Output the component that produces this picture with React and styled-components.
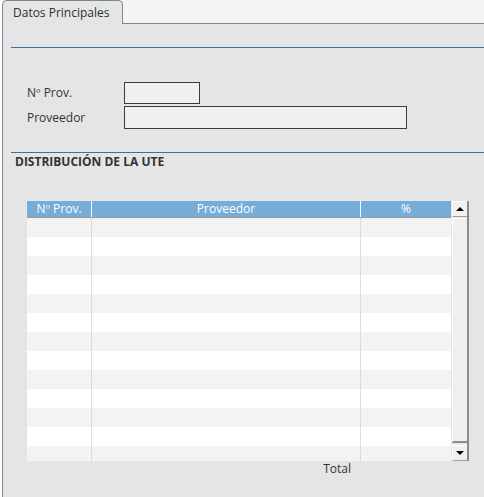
import React from 'react'
import styled, { createGlobalStyle } from 'styled-components'

const GlobalStyle = createGlobalStyle`
  html, body {
    margin: 0;
    padding: 0;
    background: #ffffff;
    font-family: "Open Sans", "DejaVu Sans", sans-serif;
    font-size: 12px;
    line-height: 16px;
    color: #333333;
  }
`

const Frame = styled.div`
  width: 482px;
  height: 497px;
  margin-left: 2px;
  display: flex;
  flex-direction: column;
`

const TabStrip = styled.div`
  display: flex;
  height: 24px;
  background: #f4f4f4;
`

const Tab = styled.div`
  width: 121px;
  box-sizing: border-box;
  border: 1px solid #7b8894;
  border-bottom: none;
  border-radius: 5px 5px 0 0;
  background: #e5e5e5;
  padding: 4px 0 0 10px;
  color: #2f2f2f;
`

const TabFill = styled.div`
  flex: 1;
  border-bottom: 1px solid #7b8894;
`

const Panel = styled.div`
  flex: 1;
  background: #e5e5e5;
  border-left: 1px solid #7b8894;
  padding-left: 8px;
  display: flex;
  flex-direction: column;
`

const Rule = styled.div`
  height: 1px;
  flex: none;
  background: #2f74ae;
  margin-top: ${({ top }) => top}px;
`

const Form = styled.div`
  display: grid;
  grid-template-columns: 97px auto;
  grid-template-rows: 22px 23px;
  row-gap: 2px;
  margin-top: 34px;
  padding-left: 16px;
  align-items: center;
`

const Label = styled.div`
  color: #333333;
`

const Input = styled.div`
  box-sizing: border-box;
  width: ${({ w }) => w}px;
  height: ${({ h }) => h}px;
  border: 1px solid #3c3c3c;
  background: #f0f0f0;
`

const SectionTitle = styled.div`
  font-weight: 700;
  color: #333333;
  padding: 1px 0 0 4px;
  height: 16px;
`

const Grid = styled.div`
  display: flex;
  margin: 30px 0 0 16px;
`

const TableArea = styled.div`
  width: 424px;
  display: flex;
  flex-direction: column;
`

const HeaderRow = styled.div`
  display: grid;
  grid-template-columns: 64px 1px 268px 1px 90px;
  box-sizing: border-box;
  height: 18px;
  border-top: 1px solid #dfe8f0;
  border-bottom: 1px solid #9a9a9a;
  background: #76acd8;
`

const HeaderCell = styled.div`
  color: #ffffff;
  text-align: center;
`

const HeaderSep = styled.div`
  background: #ffffff;
`

const Body = styled.div`
  height: 243px;
  overflow: hidden;
`

const Row = styled.div`
  display: grid;
  grid-template-columns: 64px 1px 268px 1px 90px;
  height: 19px;
  background: ${({ odd }) => (odd ? '#f3f3f3' : '#ffffff')};
`

const Cell = styled.div``

const CellSep = styled.div`
  background: #dcdcdc;
`

const ScrollBar = styled.div`
  width: 15px;
  height: 260px;
  margin: 1px 0 0 1px;
  border-right: 2px solid #8c8c8c;
  display: flex;
  flex-direction: column;
  background: #e8e8e8;
`

const ScrollButton = styled.div`
  box-sizing: border-box;
  height: 16px;
  flex: none;
  background: #f0f0f0;
  border-top: 1px solid #ffffff;
  border-left: 1px solid #ffffff;
  border-bottom: 1px solid #a0a0a0;
  display: flex;
  align-items: center;
  justify-content: center;
`

const Thumb = styled.div`
  flex: 1;
  box-sizing: border-box;
  margin: 1px 0 2px;
  background: #efefef;
  border-left: 1px solid #ffffff;
  border-top: 1px solid #ffffff;
  border-bottom: 2px solid #8c8c8c;
`

const Arrow = styled.div`
  width: 0;
  height: 0;
  border-left: 4px solid transparent;
  border-right: 4px solid transparent;
  ${({ down }) => (down ? 'border-top: 4px solid #000;' : 'border-bottom: 4px solid #000;')}
`

const TotalRow = styled.div`
  display: flex;
  justify-content: flex-end;
  width: 324px;
  margin-left: 16px;
  color: #333333;
`

const rows = Array.from({ length: 13 }, (_, i) => i)

export default function App() {
  return (
    <>
      <GlobalStyle />
      <Frame>
        <TabStrip>
          <Tab>Datos Principales</Tab>
          <TabFill />
        </TabStrip>
        <Panel>
          <Rule top={23} />
          <Form>
            <Label>Nº Prov.</Label>
            <Input w={76} h={22} />
            <Label>Proveedor</Label>
            <Input w={283} h={23} />
          </Form>
          <Rule top={23} />
          <SectionTitle>DISTRIBUCIÓN DE LA UTE</SectionTitle>
          <Grid>
            <TableArea>
              <HeaderRow>
                <HeaderCell>Nº Prov.</HeaderCell>
                <HeaderSep />
                <HeaderCell>Proveedor</HeaderCell>
                <HeaderSep />
                <HeaderCell>%</HeaderCell>
              </HeaderRow>
              <Body>
                {rows.map((i) => (
                  <Row key={i} odd={i % 2 === 0}>
                    <Cell />
                    <CellSep />
                    <Cell />
                    <CellSep />
                    <Cell />
                  </Row>
                ))}
              </Body>
            </TableArea>
            <ScrollBar>
              <ScrollButton>
                <Arrow />
              </ScrollButton>
              <Thumb />
              <ScrollButton>
                <Arrow down />
              </ScrollButton>
            </ScrollBar>
          </Grid>
          <TotalRow>Total</TotalRow>
        </Panel>
      </Frame>
    </>
  )
}
